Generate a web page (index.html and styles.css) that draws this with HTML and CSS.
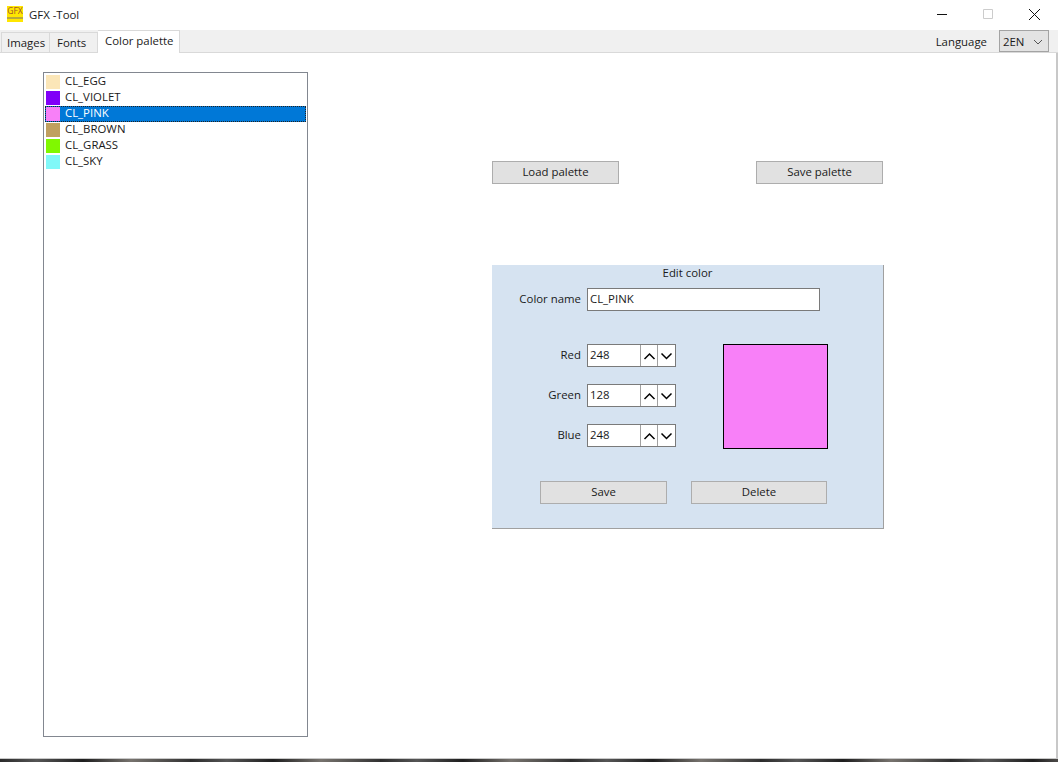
FILE: index.html
```html
<!DOCTYPE html>
<html lang="en">
<head>
	<meta charset="UTF-8">
	<title>GFX -Tool</title>
	<link rel="stylesheet" href="styles.css">
</head>
<body>
	<div class="window">
		<div class="titlebar">
			<div class="app-icon">GFX</div>
			<div class="app-title">GFX -Tool</div>
			<div class="win-buttons">
				<svg class="win-btn" width="46" height="30" viewBox="0 0 46 30"><path d="M18 14.500h10" stroke="#111" fill="none"/></svg>
				<svg class="win-btn" width="46" height="30" viewBox="0 0 46 30"><path d="M18.500 9.500h9v9h-9z" stroke="#ccc" fill="none"/></svg>
				<svg class="win-btn" width="46" height="30" viewBox="0 0 46 30"><path d="M18 9l11 11M29 9L18 20" stroke="#111" fill="none"/></svg>
			</div>
		</div>
		<div class="tabbar">
			<div class="tab">Images</div>
			<div class="tab">Fonts</div>
			<div class="tab active">Color palette</div>
			<div class="lang-label">Language</div>
			<div class="lang-select">
				<span>2EN</span>
				<svg width="10" height="6" viewBox="0 0 10 6"><path d="M1 1l4 4 4-4" stroke="#555" fill="none"/></svg>
			</div>
		</div>
		<div class="main">
			<ul class="color-list">
				<li><i class="swatch egg"></i>CL_EGG</li>
				<li><i class="swatch violet"></i>CL_VIOLET</li>
				<li class="selected"><i class="swatch pink"></i>CL_PINK</li>
				<li><i class="swatch brown"></i>CL_BROWN</li>
				<li><i class="swatch grass"></i>CL_GRASS</li>
				<li><i class="swatch sky"></i>CL_SKY</li>
			</ul>
			<div class="right">
				<div class="palette-buttons">
					<div class="btn">Load palette</div>
					<div class="btn">Save palette</div>
				</div>
				<div class="panel">
					<div class="panel-title">Edit color</div>
					<div class="name-row">
						<label class="field-label">Color name</label>
						<div class="text-input">CL_PINK</div>
					</div>
					<div class="rgb-row">
						<div class="spins">
							<div class="spin-row">
								<label class="field-label">Red</label>
								<div class="spin">
									<span class="spin-value">248</span>
									<span class="spin-btn"><svg width="13" height="8" viewBox="0 0 13 8"><path d="M1.500 7l5-5 5 5" stroke="#000" stroke-width="1.500" fill="none"/></svg></span>
									<span class="spin-btn"><svg width="13" height="8" viewBox="0 0 13 8"><path d="M1.500 1.500l5 5 5-5" stroke="#000" stroke-width="1.500" fill="none"/></svg></span>
								</div>
							</div>
							<div class="spin-row">
								<label class="field-label">Green</label>
								<div class="spin">
									<span class="spin-value">128</span>
									<span class="spin-btn"><svg width="13" height="8" viewBox="0 0 13 8"><path d="M1.500 7l5-5 5 5" stroke="#000" stroke-width="1.500" fill="none"/></svg></span>
									<span class="spin-btn"><svg width="13" height="8" viewBox="0 0 13 8"><path d="M1.500 1.500l5 5 5-5" stroke="#000" stroke-width="1.500" fill="none"/></svg></span>
								</div>
							</div>
							<div class="spin-row">
								<label class="field-label">Blue</label>
								<div class="spin">
									<span class="spin-value">248</span>
									<span class="spin-btn"><svg width="13" height="8" viewBox="0 0 13 8"><path d="M1.500 7l5-5 5 5" stroke="#000" stroke-width="1.500" fill="none"/></svg></span>
									<span class="spin-btn"><svg width="13" height="8" viewBox="0 0 13 8"><path d="M1.500 1.500l5 5 5-5" stroke="#000" stroke-width="1.500" fill="none"/></svg></span>
								</div>
							</div>
						</div>
						<div class="preview"></div>
					</div>
					<div class="panel-buttons">
						<div class="btn save">Save</div>
						<div class="btn delete">Delete</div>
					</div>
				</div>
			</div>
		</div>
		<div class="desktop"></div>
	</div>
</body>
</html>
```

FILE: styles.css
```css
*{
	margin: 0;
	padding: 0;
	box-sizing: border-box;
}
ul{
	list-style: none;
}
body{
	font-family: "Open Sans", "Liberation Sans", sans-serif;
	font-size: 11.4px;
	color: #1a1a1a;
	background: #fff;
	overflow: hidden;
}
.window{
	width: 1058px;
	height: 762px;
	display: flex;
	flex-direction: column;
}
.titlebar{
	height: 30px;
	display: flex;
	align-items: center;
	padding-left: 7px;
	padding-right: 1px;
}
.app-icon{
	width: 16px;
	height: 16px;
	margin-top: -2px;
	background: linear-gradient(#ffe600 11px, #b9a93c 11px, #b9a93c 13px, #ffe600 13px);
	color: #a0522d;
	font-size: 8.5px;
	line-height: 10px;
	text-align: center;
	overflow: hidden;
}
.app-title{
	margin-left: 6px;
	margin-top: -2px;
	flex: 1;
}
.win-buttons{
	display: flex;
}
.win-btn{
	display: block;
}
.tabbar{
	height: 23px;
	display: flex;
	align-items: flex-end;
	background: #f0f0f0;
	border-bottom: 1px solid #d9d9d9;
	padding-left: 1px;
	padding-right: 9px;
}
.tab{
	width: 48px;
	height: 21px;
	line-height: 19px;
	margin-bottom: -1px;
	padding-left: 7px;
	border: 1px solid #d9d9d9;
	border-left-width: 0;
	border-bottom: 0;
}
.tab:first-child{
	width: 49px;
	padding-left: 5px;
	border-left-width: 1px;
}
.tab.active{
	width: 82px;
	height: 23px;
	line-height: 19px;
	padding-left: 7px;
	background: #fff;
	border-bottom: 0;
}
.lang-label{
	margin-left: auto;
	margin-right: 12px;
	align-self: center;
}
.lang-select{
	width: 50px;
	height: 22px;
	align-self: flex-start;
	display: flex;
	align-items: center;
	justify-content: space-between;
	padding: 1px 5px 0 3px;
	background: #e3e3e3;
	border: 1px solid #a3a3a3;
}
.main{
	flex: 1;
	display: flex;
	padding: 19px 0 21px 43px;
	border-right: 2px solid #c8c8c8;
}
.color-list{
	width: 265px;
	border: 1px solid #828790;
	padding: 1px;
}
.color-list li{
	height: 16px;
	line-height: 14px;
	display: flex;
	align-items: flex-start;
	padding-left: 1px;
}
.color-list li.selected{
	background: #0078d7;
	color: #fff;
	outline: 1px dotted #222;
	outline-offset: -1px;
}
.swatch{
	width: 14px;
	height: 14px;
	margin-top: 1px;
	margin-right: 5px;
}
.egg{ background: #fbe6b8; }
.violet{ background: #8000f8; }
.pink{ background: #f880f8; }
.brown{ background: #c0a060; }
.grass{ background: #80f800; }
.sky{ background: #80f8f8; }
.right{
	width: 392px;
	margin-left: 184px;
	padding-top: 89px;
}
.palette-buttons{
	display: flex;
	justify-content: space-between;
	padding-right: 1px;
}
.btn{
	width: 127px;
	height: 23px;
	line-height: 20px;
	text-align: center;
	background: #e1e1e1;
	border: 1px solid #adadad;
}
.panel{
	height: 264px;
	margin-top: 81px;
	background: #d6e3f1;
	border-right: 1px solid #a0a0a0;
	border-bottom: 1px solid #a0a0a0;
	display: flex;
	flex-direction: column;
}
.panel-title{
	height: 23px;
	line-height: 15px;
	text-align: center;
}
.field-label{
	width: 95px;
	padding-right: 6px;
	padding-bottom: 2px;
	text-align: right;
}
.name-row, .spin-row{
	display: flex;
	align-items: center;
}
.text-input{
	width: 233px;
	height: 23px;
	line-height: 19px;
	padding-left: 2px;
	background: #fff;
	border: 1px solid #7a7a7a;
}
.rgb-row{
	display: flex;
	justify-content: space-between;
	margin-top: 33px;
	padding-right: 55px;
}
.spins{
	display: flex;
	flex-direction: column;
	gap: 17px;
}
.spin{
	width: 89px;
	height: 23px;
	display: flex;
	background: #fff;
	border: 1px solid #7a7a7a;
}
.spin-value{
	width: 52px;
	line-height: 19px;
	padding-left: 2px;
}
.spin-btn{
	width: 17px;
	display: flex;
	align-items: center;
	justify-content: center;
	border-left: 1px solid #a0a0a0;
}
.spin-btn:last-child{
	width: 18px;
}
.preview{
	width: 105px;
	height: 105px;
	background: #f880f8;
	border: 1px solid #000;
}
.panel-buttons{
	display: flex;
	gap: 24px;
	margin-top: 32px;
	padding-left: 48px;
}
.btn.delete{
	width: 136px;
}
.desktop{
	height: 4px;
	border-top: 1px solid #c8c8c8;
	background: repeating-linear-gradient(90deg, #2a2a2a 0, #555 37px, #1e1e1e 83px, #77736e 131px, #333 190px);
}
```
